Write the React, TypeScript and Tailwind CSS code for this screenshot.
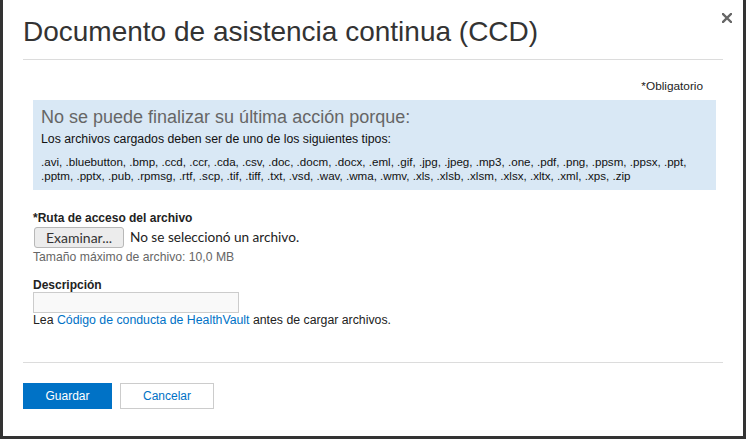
import React from "react";

export default function App() {
  const arial = { fontFamily: '"Liberation Sans", Arial, sans-serif' };
  return (
    <div className="w-[749px] h-[443px] bg-white" style={arial}>
      <div className="relative w-[746px] h-[439px] border-l-[3px] border-r-[3px] border-b-[3px] border-[#333] bg-white">
        <button className="absolute left-[719px] top-[13px] w-[10px] h-[10px] p-0" aria-label="Cerrar">
          <svg width="10" height="10" viewBox="0 0 10 10">
            <path d="M1 1 L9 9 M9 1 L1 9" stroke="#666" strokeWidth="2.4" strokeLinecap="square" />
          </svg>
        </button>
        <div className="px-5 pt-4">
          <h1 className="text-[28px] leading-[31px] text-[#333] font-normal">
            Documento de asistencia continua (CCD)
          </h1>
          <div className="mt-3 h-px bg-[#dcdcdc]" />
          <div className="mx-[10px]">
            <div className="mt-[19px] text-right pr-[10px] text-[11.8px] leading-[14px] text-[#222]">
              *Obligatorio
            </div>
            <div className="mt-[7px] w-[683px] bg-[#d9e8f5] px-2 pt-[7px] pb-[7px]">
              <div className="text-[18px] leading-[20px] text-[#666]">
                No se puede finalizar su última acción porque:
              </div>
              <div className="mt-[5px] text-[12.3px] leading-[14px] text-[#111]">
                Los archivos cargados deben ser de uno de los siguientes tipos:
              </div>
              <div className="mt-[9px] text-[11.6px] leading-[14px] text-[#111] whitespace-nowrap">
                .avi, .bluebutton, .bmp, .ccd, .ccr, .cda, .csv, .doc, .docm, .docx, .eml, .gif, .jpg, .jpeg, .mp3, .one, .pdf, .png, .ppsm, .ppsx, .ppt,
                <br />
                .pptm, .pptx, .pub, .rpmsg, .rtf, .scp, .tif, .tiff, .txt, .vsd, .wav, .wma, .wmv, .xls, .xlsb, .xlsm, .xlsx, .xltx, .xml, .xps, .zip
              </div>
            </div>
            <div className="mt-[21px] text-[12px] leading-[14px] font-bold text-[#222]">
              *Ruta de acceso del archivo
            </div>
            <div className="mt-[2px] flex items-center gap-[6px]" style={{ fontFamily: 'Lato, "Open Sans", sans-serif' }}>
              <span className="h-[21px] w-[90px] ml-px flex items-center justify-center rounded-[3px] border border-[#b8b8b8] bg-[#ececec] text-[14px] text-[#333]">
                Examinar...
              </span>
              <span className="text-[13.6px] text-[#222]">No se seleccionó un archivo.</span>
            </div>
            <div className="mt-[2px] text-[12.2px] leading-[14px] text-[#666]">
              Tamaño máximo de archivo: 10,0 MB
            </div>
            <div className="mt-[14px] text-[12px] leading-[14px] font-bold text-[#222]">
              Descripción
            </div>
            <div className="h-[21px] w-[206px] border border-[#ccc] bg-[#f9f9f9]" />
            <div className="text-[12.3px] leading-[14px] text-[#222]">
              Lea <span className="text-[#0072c6]">Código de conducta de HealthVault</span> antes de cargar archivos.
            </div>
          </div>
          <div className="mt-[35px] h-px bg-[#dcdcdc]" />
          <div className="mt-[20px] flex gap-2">
            <span className="h-[26px] w-[89px] flex items-center justify-center bg-[#0072c6] text-white text-[12px]">
              Guardar
            </span>
            <span className="h-[26px] w-[94px] flex items-center justify-center border border-[#ccc] bg-white text-[#0072c6] text-[12px]">
              Cancelar
            </span>
          </div>
        </div>
      </div>
    </div>
  );
}
